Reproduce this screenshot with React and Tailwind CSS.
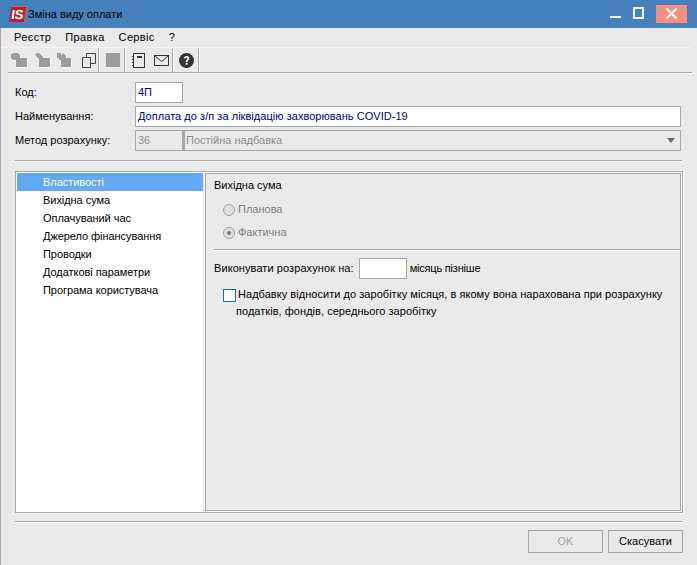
import React from "react";

const font = { fontFamily: '"Liberation Sans", Arial, sans-serif' };

const navItems = [
  "Властивості",
  "Вихідна сума",
  "Оплачуваний час",
  "Джерело фінансування",
  "Проводки",
  "Додаткові параметри",
  "Програма користувача",
];

const Logo = () => (
  <div className="flex h-[16px] w-[16px] -skew-x-[8deg] items-center justify-center bg-[#b5202c] border-t border-r border-white/30">
    <span className="text-[13px] leading-none font-bold text-white">IS</span>
  </div>
);

const ToolSep = ({ className }) => <div className={`h-[24px] w-[2px] border-l border-[#a8a8a8] border-r-white border-r ${className}`} />;

const GrayIcon = ({ d, className }) => (
  <svg width="17" height="15" viewBox="0 0 17 15" className={className}>
    <path d={d} fill="#ffffff" transform="translate(1 1)" />
    <path d={d} fill="#9c9c9c" />
  </svg>
);

const TextField = ({ className, children, muted }) => (
  <div
    className={`flex h-[21px] items-center border border-[#a8a8a8] ${
      muted ? "text-[#8c8c8c]" : "bg-white text-[#000080]"
    } ${className}`}
  >
    {children}
  </div>
);

const Radio = ({ label, checked }) => (
  <div className="flex h-[23px] items-center pl-[9px] text-[#808080]">
    <span className="flex h-[12px] w-[12px] items-center justify-center rounded-full border border-[#a0a0a0] bg-[#e0e0e0]">
      {checked && <span className="h-[4px] w-[4px] rounded-full bg-[#777777]" />}
    </span>
    <span className="ml-[3px]">{label}</span>
  </div>
);

const Divider = ({ className }) => <div className={`h-[1px] bg-[#a8a8a8] shadow-[0_1px_0_#fff] ${className}`} />;

export default function App() {
  return (
    <div className="flex h-[565px] w-[697px] flex-col overflow-hidden bg-[#eaeaea] text-[11px] text-black" style={font}>
      <div className="flex h-[28px] shrink-0 items-center bg-[#4581bc] pl-[10px]">
        <Logo />
        <span className="ml-[2px] text-[11px]">Зміна виду оплати</span>
        <div className="ml-auto flex items-center">
          <div className="mt-[6px] h-[2px] w-[11px] bg-white" />
          <div className="-mt-[2px] ml-[12px] h-[12px] w-[11px] border-2 border-white" />
          <div className="-mt-[1px] ml-[12px] mr-[10px] flex h-[18px] w-[31px] items-center justify-center bg-[#f98e7c]">
            <svg width="11" height="11" viewBox="0 0 11 11" stroke="white" strokeWidth="2">
              <path d="M0.500 0.500l10 10M10.500 0.500l-10 10" />
            </svg>
          </div>
        </div>
      </div>

      <div className="flex min-h-0 flex-1 flex-col border-l border-[#a8a8a8]">
        <div className="flex h-[19px] shrink-0 items-center gap-[14px] pl-[13px] tracking-[0.35px]">
          <span>Реєстр</span>
          <span>Правка</span>
          <span>Сервіс</span>
          <span>?</span>
        </div>
        <div className="mr-[6px] h-[1px] bg-[#f4f4f4]" />
        <div className="mr-[6px] flex h-[24px] shrink-0 items-center pl-[10px]">
          <GrayIcon d="M0 2L2 0H7L9 2V5H16V14H5V7H2L0 5z" />
          <GrayIcon className="ml-[7px]" d="M0 2L2 0L4 0L8 4V5H15V14H4V6z" />
          <GrayIcon className="ml-[5px]" d="M0 0H4V2H5L6 0L9 3V5H14V14H4V7H2V5H0z" />
          <svg className="ml-[8px]" width="14" height="15" viewBox="0 0 14 15" fill="none" stroke="#444444">
            <rect x="0.500" y="4.500" width="8" height="10" />
            <path d="M4.500 4V0.500H13.500V10.500H9" />
          </svg>
          <ToolSep className="ml-[2px]" />
          <div className="ml-[6px] h-[14px] w-[14px] bg-[#9c9c9c]" />
          <ToolSep className="ml-[4px]" />
          <svg className="ml-[6px]" width="14" height="15" viewBox="0 0 14 15" fill="none" stroke="#333333">
            <rect x="1.500" y="0.500" width="11" height="14" />
            <path d="M5 3.500H10M5 4.500H10M0 3.500H1M0 6.500H1M0 9.500H1M0 12.500H1" strokeWidth="1" />
          </svg>
          <svg className="ml-[8px]" width="15" height="11" viewBox="0 0 15 11" fill="none" stroke="#333333">
            <rect x="0.500" y="0.500" width="14" height="10" />
            <path d="M1 1L7.500 6.500L14 1" />
          </svg>
          <ToolSep className="ml-[3px]" />
          <svg className="ml-[5px]" width="15" height="15" viewBox="0 0 15 15">
            <circle cx="7.500" cy="7.500" r="7.500" fill="#333333" />
            <path d="M4.800 5.600C4.800 3.900 6 3 7.600 3C9.200 3 10.400 3.900 10.400 5.300C10.400 7.200 8.500 7 8.500 8.900H6.700C6.700 6.500 8.500 6.600 8.500 5.400C8.500 4.800 8.100 4.500 7.600 4.500C7 4.500 6.600 4.900 6.600 5.600z" fill="#ffffff" />
            <rect x="6.700" y="9.800" width="1.900" height="1.900" fill="#ffffff" />
          </svg>
          <ToolSep className="ml-[4px]" />
        </div>
        <Divider className="mr-[5px] ml-[7px]" />

        <div className="flex flex-col gap-[3px] pl-[14px] pr-[16px] pt-[9px]">
          <div className="flex items-center">
            <span className="w-[120px]">Код:</span>
            <TextField className="w-[48px] pl-[2px]">4П</TextField>
          </div>
          <div className="flex items-center">
            <span className="w-[120px]">Найменування:</span>
            <TextField className="flex-1 pl-[2px] tracking-[0.04px]">Доплата до з/п за ліквідацію захворювань COVID-19</TextField>
          </div>
          <div className="flex items-center">
            <span className="w-[120px]">Метод розрахунку:</span>
            <TextField muted className="w-[48px] pl-[2px]">36</TextField>
            <TextField muted className="flex-1 justify-between border-l-2 pl-[1px]">
              <span>Постійна надбавка</span>
              <svg width="8" height="5" viewBox="0 0 8 5" fill="#666666" className="mr-[5px]">
                <path d="M0 0H8L4 5z" />
              </svg>
            </TextField>
          </div>
        </div>

        <Divider className="ml-[14px] mr-[15px] mt-[9px]" />

        <div className="ml-[14px] mr-[14px] mt-[10px] flex h-[342px] border border-[#a8a8a8] shadow-[1px_1px_0_#fff]">
          <div className="w-[187px] bg-white pl-[1px] pt-[1px] tracking-[-0.05px]">
            {navItems.map((item, i) => (
              <div
                key={item}
                className={`flex h-[18px] items-center pl-[26px] ${i === 0 ? "bg-[#64a9f4] text-white" : ""}`}
              >
                {item}
              </div>
            ))}
          </div>
          <div className="ml-[1px] flex-1 bg-white p-[1px]">
            <div className="h-full border border-[#a8a8a8] bg-[#eaeaea] pl-[8px]">
              <div className="mt-[4px] h-[15px] leading-[15px]">Вихідна сума</div>
              <div className="mt-[5px] flex flex-col">
                <Radio label="Планова" />
                <Radio checked label="Фактична" />
              </div>
              <Divider className="mt-[5px]" />
              <div className="mt-[8px] flex items-center">
                <span className="tracking-[0.08px]">Виконувати розрахунок на:</span>
                <div className="ml-[5px] h-[21px] w-[48px] border border-[#a8a8a8] bg-white" />
                <span className="ml-[3px] tracking-[-0.2px]">місяць пізніше</span>
              </div>
              <div className="mt-[7px] flex pl-[9px]">
                <div className="mt-[3px] h-[13px] w-[13px] shrink-0 border border-[#2a6aa6] bg-white" />
                <p className="ml-[2px] leading-[17px] whitespace-nowrap tracking-[0.04px]">
                  Надбавку відносити до заробітку місяця, в якому вона нарахована при розрахунку
                </p>
              </div>
              <p className="pl-[22px] leading-[17px] tracking-[0.04px]">податків, фондів, середнього заробітку</p>
            </div>
          </div>
        </div>

        <Divider className="ml-[14px] mr-[15px] mt-[8px]" />

        <div className="mr-[14px] mt-[8px] flex justify-end gap-[5px]">
          <button className="flex h-[23px] w-[75px] items-center justify-center border border-[#a8a8a8] text-[#a0a0a0]">OK</button>
          <button className="flex h-[23px] w-[75px] items-center justify-center border border-[#a8a8a8]">Скасувати</button>
        </div>
      </div>
    </div>
  );
}
